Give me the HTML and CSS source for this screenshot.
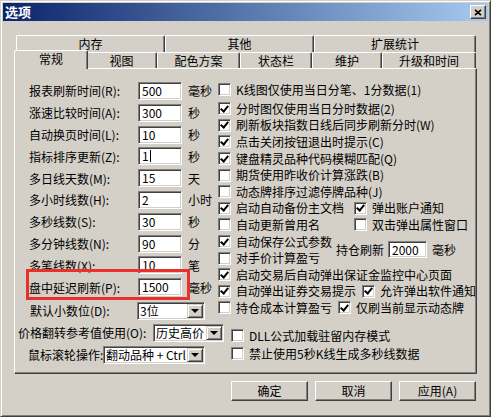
FILE: index.html
```html
<!DOCTYPE html>
<html>
<head>
<meta charset="utf-8">
<title>选项</title>
<link rel="stylesheet" href="styles.css">
</head>
<body>
<div class="window">
	<div class="titlebar">
		<span class="title">选项</span>
		<span class="close"><svg width="8" height="7" viewBox="0 0 8 7"><path d="M1 0.8L7 6.2M7 0.8L1 6.2" stroke="#000" stroke-width="1.7" fill="none"/></svg></span>
	</div>

	<div class="tabs">
		<div class="tabrow back">
			<div class="tab w149">内存</div>
			<div class="tab w149">其他</div>
			<div class="tab w162">扩展统计</div>
		</div>
		<div class="tabrow front">
			<div class="tab active w70">常规</div>
			<div class="tab w71">视图</div>
			<div class="tab w83">配色方案</div>
			<div class="tab w72">状态栏</div>
			<div class="tab w70">维护</div>
			<div class="tab w94">升级和时间</div>
		</div>
	</div>

	<div class="panel">
		<div class="left">
			<div class="field"><span class="label">报表刷新时间(R):</span><span class="edit">500</span><span class="unit">毫秒</span></div>
			<div class="field"><span class="label">涨速比较时间(A):</span><span class="edit">300</span><span class="unit">秒</span></div>
			<div class="field"><span class="label">自动换页时间(L):</span><span class="edit">10</span><span class="unit">秒</span></div>
			<div class="field"><span class="label">指标排序更新(Z):</span><span class="edit">1<span class="caret"></span></span><span class="unit">秒</span></div>
			<div class="field"><span class="label">多日线天数(M):</span><span class="edit">15</span><span class="unit">天</span></div>
			<div class="field"><span class="label">多小时线数(H):</span><span class="edit">2</span><span class="unit">小时</span></div>
			<div class="field"><span class="label">多秒线数(S):</span><span class="edit">30</span><span class="unit">秒</span></div>
			<div class="field"><span class="label">多分钟线数(N):</span><span class="edit">90</span><span class="unit">分</span></div>
			<div class="field"><span class="label">多笔线数(X):</span><span class="edit">10</span><span class="unit">笔</span></div>
			<div class="field marked"><span class="label">盘中延迟刷新(P):</span><span class="edit">1500</span><span class="unit">毫秒</span><span class="mark"></span></div>

			<div class="combo-row decimal"><span class="label">默认小数位(D):</span><span class="combo w68"><span class="value">3位</span><span class="arrow"></span></span></div>
			<div class="combo-row price"><span class="label">价格翻转参考值使用(O):</span><span class="combo w71"><span class="value">历史高价</span><span class="arrow"></span></span></div>
			<div class="combo-row wheel"><span class="label">鼠标滚轮操作:</span><span class="combo w102"><span class="value">翻动品种 + Ctrl</span><span class="arrow"></span></span></div>
		</div>

		<div class="right">
			<div class="check first"><span class="box"></span>K线图仅使用当日分笔、1分数据(1)</div>
			<div class="check"><span class="box on"></span>分时图仅使用当日分时数据(2)</div>
			<div class="check"><span class="box on"></span>刷新板块指数日线后同步刷新分时(W)</div>
			<div class="check"><span class="box on"></span>点击关闭按钮退出时提示(C)</div>
			<div class="check"><span class="box on"></span>键盘精灵品种代码模糊匹配(Q)</div>
			<div class="check"><span class="box"></span>期货使用昨收价计算涨跌(B)</div>
			<div class="check"><span class="box"></span>动态牌排序过滤停牌品种(J)</div>
			<div class="pair">
				<div class="check wide"><span class="box on"></span>启动自动备份主文档</div>
				<div class="check"><span class="box on"></span>弹出账户通知</div>
			</div>
			<div class="pair">
				<div class="check wide"><span class="box"></span>自动更新曾用名</div>
				<div class="check"><span class="box"></span>双击弹出属性窗口</div>
			</div>
			<div class="group">
				<div class="stack">
					<div class="check"><span class="box on"></span>自动保存公式参数</div>
					<div class="check"><span class="box"></span>对手价计算盈亏</div>
				</div>
				<div class="hold"><span>持仓刷新</span><span class="edit small">2000</span><span>毫秒</span></div>
			</div>
			<div class="check"><span class="box on"></span>启动交易后自动弹出保证金监控中心页面</div>
			<div class="pair">
				<div class="check"><span class="box on"></span>自动弹出证券交易提示</div>
				<div class="check"><span class="box on"></span>允许弹出软件通知</div>
			</div>
			<div class="pair">
				<div class="check"><span class="box"></span>持仓成本计算盈亏</div>
				<div class="check"><span class="box on"></span>仅刷当前显示动态牌</div>
			</div>

			<div class="extra">
				<div class="check tall"><span class="box"></span>DLL公式加载驻留内存模式</div>
				<div class="check tall"><span class="box"></span>禁止使用5秒K线生成多秒线数据</div>
			</div>
		</div>
	</div>

	<div class="buttons">
		<button>确定</button>
		<button>取消</button>
		<button>应用(A)</button>
	</div>
</div>
</body>
</html>
```

FILE: styles.css
```css
html {
	margin:0px;
	padding:0px;
	background:#d4d0c8;
}

body {
	margin:0px;
	padding:0px;
	font-family:"Noto Sans CJK SC","Liberation Sans",sans-serif;
	font-size:12px;
	color:#000000;
}

.window {
	width:491px;
	height:417px;
	box-sizing:border-box;
	background:#d4d0c8;
	border:1px solid;
	border-color:#d4d0c8 #404040 #404040 #d4d0c8;
	box-shadow:inset 1px 1px #ffffff, inset -1px -1px #808080;
	padding:2px;
}

/* title bar */
.titlebar {
	height:18px;
	display:flex;
	align-items:center;
	justify-content:space-between;
	background:linear-gradient(to right, #0a246a, #a6caf0);
	padding:0px 2px 0px 2px;
}

.titlebar .title {
	color:#ffffff;
	font-weight:bold;
	font-size:13px;
	line-height:18px;
}

.titlebar .close {
	width:16px;
	height:14px;
	box-sizing:border-box;
	display:flex;
	align-items:center;
	justify-content:center;
	background:#d4d0c8;
	border:1px solid;
	border-color:#ffffff #404040 #404040 #ffffff;
	box-shadow:inset -1px -1px #808080;
}

/* tabs */
.tabs {
	margin:14px 0px 0px 13px;
	width:460px;
}

.tabrow {
	display:flex;
}

.tabrow.back {
	height:17px;
}

.tabrow.front {
	height:16px;
	align-items:flex-end;
}

.tab {
	box-sizing:border-box;
	height:100%;
	display:flex;
	align-items:center;
	justify-content:center;
	border-top:1px solid #ffffff;
	border-left:1px solid #ffffff;
	border-right:1px solid #404040;
	border-top-left-radius:2px;
	border-top-right-radius:2px;
	box-shadow:inset -1px 0px #808080;
	line-height:14px;
}

.tab.active {
	height:19px;
	margin:-2px -2px -1px -2px;
	background:#d4d0c8;
	position:relative;
	z-index:1;
	padding-bottom:2px;
}

.w149 { width:149px; }
.w162 { width:162px; }
.w70 { width:70px; }
.w71 { width:71px; }
.w83 { width:83px; }
.w72 { width:72px; }
.w94 { width:94px; }
.tab.active.w70 { width:74px; }

/* panel */
.panel {
	margin-left:11px;
	width:463px;
	height:306px;
	box-sizing:border-box;
	border:1px solid;
	border-color:#ffffff #404040 #404040 #ffffff;
	box-shadow:inset -1px -1px #808080;
	display:flex;
}

.left {
	width:203px;
	flex:none;
	padding-top:11.1px;
}

.field {
	height:21.8px;
	display:flex;
	align-items:center;
	padding-left:14px;
}

.field.marked {
	position:relative;
}

.field .label {
	width:109px;
	white-space:nowrap;
}

.unit {
	margin-left:6px;
	white-space:nowrap;
}

.edit {
	width:44px;
	height:18px;
	box-sizing:border-box;
	display:flex;
	align-items:center;
	background:#ffffff;
	border:1px solid;
	border-color:#808080 #ffffff #ffffff #808080;
	box-shadow:inset 1px 1px #404040, inset -1px -1px #d4d0c8;
	padding-left:3px;
	line-height:14px;
}

.edit.small {
	width:39px;
	height:17px;
	margin:0px 5px 0px 4px;
}

.caret {
	display:inline-block;
	width:1px;
	height:12px;
	margin-left:1px;
	background:#000000;
}

/* red annotation frame */
.mark {
	position:absolute;
	left:11px;
	top:-7.3px;
	width:164px;
	height:31px;
	box-sizing:border-box;
	border:3px solid #e8302e;
}

.combo-row {
	height:22px;
	display:flex;
	align-items:center;
}

.combo-row .label {
	white-space:nowrap;
	overflow:hidden;
	flex:none;
	line-height:16px;
}

.combo-row.decimal {
	margin-top:1.9px;
	padding-left:15px;
}

.combo-row.decimal .label { width:107px; }

.combo-row.price {
	padding-left:3px;
}

.combo-row.price .label { width:135px; }

.combo-row.wheel {
	padding-left:13px;
}

.combo-row.wheel .label { width:75px; }

.combo {
	height:18px;
	box-sizing:border-box;
	flex:none;
	display:flex;
	align-items:stretch;
	background:#ffffff;
	border:1px solid;
	border-color:#808080 #ffffff #ffffff #808080;
	box-shadow:inset 1px 1px #404040, inset -1px -1px #d4d0c8;
	padding:1px;
}

.w68 { width:68px; }
.w102 { width:102px; }

.combo .value {
	flex:1;
	min-width:0px;
	display:flex;
	align-items:center;
	overflow:hidden;
	white-space:nowrap;
	padding-left:1px;
}

.combo .arrow {
	width:16px;
	flex:none;
	box-sizing:border-box;
	background:#d4d0c8;
	border:1px solid;
	border-color:#d4d0c8 #404040 #404040 #d4d0c8;
	box-shadow:inset 1px 1px #ffffff, inset -1px -1px #808080;
	display:flex;
	align-items:center;
	justify-content:center;
}

.combo .arrow::after {
	content:"";
	width:0px;
	height:0px;
	border-top:4px solid #000000;
	border-left:4px solid transparent;
	border-right:4px solid transparent;
	margin-top:1px;
}

/* check boxes */
.right {
	flex:1;
	padding-top:9.5px;
}

.check {
	height:16.6px;
	display:flex;
	align-items:center;
	white-space:nowrap;
	line-height:14px;
}

.check.first {
	height:22px;
}

.check.tall {
	height:18px;
}

.box {
	width:13px;
	height:13px;
	box-sizing:border-box;
	flex:none;
	margin-right:5px;
	background:#ffffff;
	border:1px solid;
	border-color:#808080 #ffffff #ffffff #808080;
	box-shadow:inset 1px 1px #404040, inset -1px -1px #d4d0c8;
	display:flex;
	align-items:center;
	justify-content:center;
}

.box.on::after {
	content:"";
	width:3px;
	height:6px;
	border:solid #000000;
	border-width:0px 2px 2px 0px;
	transform:rotate(40deg);
	margin-top:-2px;
}

.pair {
	display:flex;
	gap:6px;
}

.check.wide {
	width:130px;
}

.group {
	display:flex;
	align-items:center;
}

.stack {
	width:118px;
}

.hold {
	display:flex;
	align-items:center;
	white-space:nowrap;
}

.extra {
	margin-top:10.7px;
	padding-left:13px;
}

/* bottom buttons */
.buttons {
	display:flex;
	justify-content:flex-end;
	gap:7px;
	margin-top:7px;
	padding-right:12px;
}

.buttons button {
	width:77px;
	height:20px;
	box-sizing:border-box;
	background:#d4d0c8;
	font-family:"Noto Sans CJK SC","Liberation Sans",sans-serif;
	font-size:12px;
	color:#000000;
	padding:0px;
	border:1px solid;
	border-color:#ffffff #404040 #404040 #ffffff;
	box-shadow:inset -1px -1px #808080;
	line-height:14px;
}
```
